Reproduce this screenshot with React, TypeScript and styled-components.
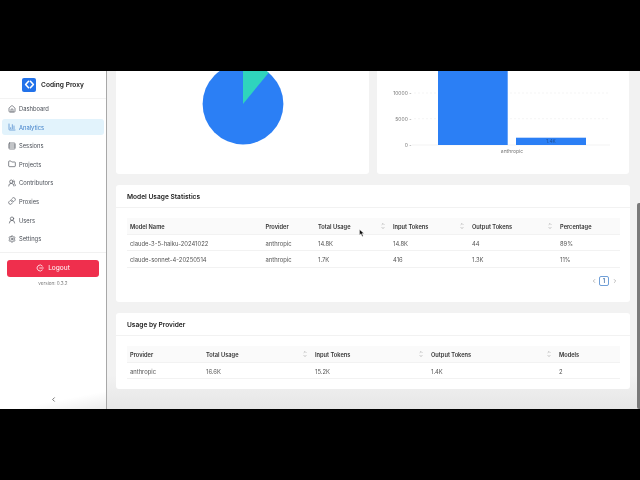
import React from 'react';
import styled, { createGlobalStyle } from 'styled-components';
import { Home, ChartColumn, Rows3, Folder, UsersRound, Link, UserRound, Settings, ChevronLeft, ChevronRight, ChevronUp, ChevronDown } from 'lucide-react';

const GlobalStyle = createGlobalStyle`
  html, body { margin: 0; padding: 0; background: #000; }
  body { font-family: Inter, "Liberation Sans", sans-serif; }
`;

const Page = styled.div`
  width: 640px;
  height: 480px;
  display: flex;
  flex-direction: column;
  justify-content: center;
  background: #000;
`;

const Frame = styled.div`
  position: relative;
  height: 338px;
  display: flex;
  overflow: hidden;
  background: linear-gradient(#f2f2f2 0, #f2f2f2 90%, #e6e6e6 100%);
  filter: blur(0.3px);
`;

const Sidebar = styled.aside`
  width: 107px;
  box-sizing: border-box;
  flex-shrink: 0;
  display: flex;
  flex-direction: column;
  background: #fff;
  border-right: 1.5px solid #a8a8a8;
`;

const Brand = styled.div`
  height: 27px;
  display: flex;
  align-items: center;
  justify-content: center;
  gap: 5px;
  border-bottom: 1px solid #f3f3f3;
  font-size: 6.6px;
  font-weight: 600;
  color: #222;
`;

const Logo = styled.div`
  width: 14px;
  height: 14px;
  border-radius: 2px;
  background: #2272ea;
  display: flex;
  align-items: center;
  justify-content: center;
`;

const Menu = styled.nav`
  display: flex;
  flex-direction: column;
  gap: 2.6px;
  padding: 1.5px 2px 5px;
  border-bottom: 1px solid #f1f1f1;
`;

const MenuItem = styled.div<{ $active?: boolean }>`
  height: 16px;
  display: flex;
  align-items: center;
  gap: 3px;
  padding-left: 6px;
  border-radius: 3px;
  font-size: 5.8px;
  color: ${props => (props.$active ? '#3f7fc9' : '#4a4f57')};
  background: ${props => (props.$active ? '#e2f3fc' : 'transparent')};
`;

const LogoutButton = styled.div`
  margin: 7px 7px 0;
  height: 17px;
  border-radius: 3px;
  background: #ef2f4d;
  color: #fff;
  display: flex;
  align-items: center;
  justify-content: center;
  gap: 4px;
  font-size: 6.6px;
`;

const Version = styled.div`
  margin-top: 4px;
  text-align: center;
  font-size: 4.6px;
  color: #777;
`;

const Collapse = styled.div`
  margin-top: auto;
  height: 20px;
  display: flex;
  align-items: center;
  justify-content: center;
  color: #444;
  background: linear-gradient(to bottom right, #fff 55%, #ececec 100%);
`;

const Main = styled.main`
  flex: 1;
  display: flex;
  flex-direction: column;
  gap: 11px;
  padding: 0 11px 0 9px;
`;

const ChartRow = styled.div`
  display: grid;
  grid-template-columns: 253px 252px;
  gap: 8px;
  height: 103px;
`;

const Card = styled.section`
  background: #fff;
  border-radius: 3px;
  overflow: hidden;
`;

const ChartCard = styled(Card)`
  border-radius: 0 0 3px 3px;
`;

const TableCard = styled(Card)<{ $height: number }>`
  height: ${props => props.$height}px;
`;

const CardTitle = styled.h3`
  margin: 0;
  height: 23px;
  box-sizing: border-box;
  padding: 1px 0 0 11px;
  display: flex;
  align-items: center;
  font-size: 6.6px;
  font-weight: 600;
  color: #222;
  border-bottom: 1px solid #f2f2f2;
`;

const TableWrap = styled.div`
  margin: 10px 9.5px 0 11px;
`;

const Row = styled.div<{ $cols: string; $head?: boolean }>`
  display: grid;
  grid-template-columns: ${props => props.$cols};
  height: ${props => (props.$head ? '17px' : '16.3px')};
  align-items: center;
  font-size: ${props => (props.$head ? '5.7px' : '5.85px')};
  font-weight: ${props => (props.$head ? 600 : 400)};
  color: ${props => (props.$head ? '#333' : '#555')};
  background: ${props => (props.$head ? '#fafafa' : '#fff')};
  border-bottom: 1px solid #f2f2f2;
  box-sizing: border-box;
`;

const Cell = styled.div`
  position: relative;
  padding: 1px 0 0 3px;
  box-sizing: border-box;
  height: 100%;
  display: flex;
  align-items: center;
  white-space: nowrap;
`;

const Sorter = styled.span`
  position: absolute;
  right: 5px;
  top: 50%;
  transform: translateY(-50%);
  display: flex;
  flex-direction: column;
  color: #a0a0a0;
  line-height: 0;
`;

const Pager = styled.div`
  margin-top: 8px;
  display: flex;
  justify-content: flex-end;
  align-items: center;
  gap: 2.5px;
  padding-right: 12px;
  color: #bdbdbd;
`;

const PageNumber = styled.span`
  width: 10px;
  height: 10px;
  box-sizing: border-box;
  border: 1px solid #6f9fd8;
  border-radius: 2px;
  display: flex;
  align-items: center;
  justify-content: center;
  font-size: 5.5px;
  font-weight: 600;
  color: #3f6fa8;
`;

const ScrollThumb = styled.div`
  position: absolute;
  right: 0;
  top: 132px;
  bottom: 0;
  width: 3px;
  border-radius: 2px 0 0 2px;
  background: #7a7a7a;
`;

const Cursor = styled.svg`
  position: absolute;
  left: 359px;
  top: 158px;
`;

const menu = [
  { label: 'Dashboard', Icon: Home },
  { label: 'Analytics', Icon: ChartColumn, active: true },
  { label: 'Sessions', Icon: Rows3 },
  { label: 'Projects', Icon: Folder },
  { label: 'Contributors', Icon: UsersRound },
  { label: 'Proxies', Icon: Link },
  { label: 'Users', Icon: UserRound },
  { label: 'Settings', Icon: Settings },
];

interface Column {
  title: string;
  sort?: boolean;
}

const modelCols = '135.5px 52.5px 75px 79px 88px 63px';
const modelColumns: Column[] = [
  { title: 'Model Name' },
  { title: 'Provider' },
  { title: 'Total Usage', sort: true },
  { title: 'Input Tokens', sort: true },
  { title: 'Output Tokens', sort: true },
  { title: 'Percentage' },
];
const modelRows = [
  ['claude-3-5-haiku-20241022', 'anthropic', '14.8K', '14.8K', '44', '89%'],
  ['claude-sonnet-4-20250514', 'anthropic', '1.7K', '416', '1.3K', '11%'],
];

const providerCols = '76px 109px 116px 128px 64px';
const providerColumns: Column[] = [
  { title: 'Provider' },
  { title: 'Total Usage', sort: true },
  { title: 'Input Tokens', sort: true },
  { title: 'Output Tokens', sort: true },
  { title: 'Models' },
];
const providerRows = [['anthropic', '16.6K', '15.2K', '1.4K', '2']];

const DataTable: React.FC<{ cols: string; columns: Column[]; rows: string[][] }> = ({ cols, columns, rows }) => (
  <TableWrap>
    <Row $cols={cols} $head>
      {columns.map(col => (
        <Cell key={col.title}>
          {col.title}
          {col.sort && (
            <Sorter>
              <ChevronUp size={4} strokeWidth={4} />
              <ChevronDown size={4} strokeWidth={4} />
            </Sorter>
          )}
        </Cell>
      ))}
    </Row>
    {rows.map(row => (
      <Row $cols={cols} key={row[0]}>
        {row.map((value, i) => (
          <Cell key={i}>{value}</Cell>
        ))}
      </Row>
    ))}
  </TableWrap>
);

const PieChart = () => (
  <svg width="253" height="103" viewBox="116 71 253 103">
    <circle cx="243" cy="104" r="40.4" fill="#2b7ff5" />
    <path d="M243 104 L243 63.6 A40.4 40.4 0 0 1 268.7 72.8 Z" fill="#2fd4bd" />
  </svg>
);

const BarChart = () => (
  <svg width="252" height="103" viewBox="377 71 252 103" fontFamily="Inter, sans-serif" fontSize="5" fill="#777">
    {[93, 118.7].map(y => (
      <line key={y} x1="414" x2="610" y1={y} y2={y} stroke="#f0f0f0" strokeWidth="0.7" strokeDasharray="2 2" />
    ))}
    <line x1="412" x2="610" y1="145" y2="145" stroke="#eee" strokeWidth="0.7" />
    <text x="411.5" y="94.8" textAnchor="end">10000 -</text>
    <text x="411.5" y="120.5" textAnchor="end">5000 -</text>
    <text x="411.5" y="146.8" textAnchor="end">0 -</text>
    <rect x="438" y="60" width="69.7" height="85" fill="#2b7ff5" />
    <rect x="516" y="137.7" width="70" height="7.3" fill="#2b7ff5" />
    <text x="551" y="143.2" textAnchor="middle" fill="#1f4f94" fontSize="4.8">1.4K</text>
    <text x="512" y="153.2" textAnchor="middle">anthropic</text>
  </svg>
);

const App: React.FC = () => (
  <>
    <GlobalStyle />
    <Page>
      <Frame>
        <Sidebar>
          <Brand>
            <Logo>
              <svg width="11" height="11" viewBox="0 0 24 24" fill="none" stroke="#fff" strokeWidth="3.4" strokeLinejoin="round" strokeLinecap="round">
                <path d="M10 5 L3.5 12 L10 19" />
                <path d="M14 5 L20.5 12 L14 19" />
              </svg>
            </Logo>
            Coding Proxy
          </Brand>
          <Menu>
            {menu.map(({ label, Icon, active }) => (
              <MenuItem key={label} $active={active}>
                <Icon size={8} strokeWidth={2} />
                {label}
              </MenuItem>
            ))}
          </Menu>
          <LogoutButton>
            <svg width="8" height="8" viewBox="0 0 24 24" fill="none" stroke="#fff" strokeWidth="2.4" strokeLinecap="round">
              <path d="M19 6 A9 9 0 1 0 19 18" />
              <path d="M11 12 H22" />
            </svg>
            Logout
          </LogoutButton>
          <Version>version: 0.3.2</Version>
          <Collapse>
            <ChevronLeft size={7} strokeWidth={2.5} />
          </Collapse>
        </Sidebar>
        <Main>
          <ChartRow>
            <ChartCard>
              <PieChart />
            </ChartCard>
            <ChartCard>
              <BarChart />
            </ChartCard>
          </ChartRow>
          <TableCard $height={117}>
            <CardTitle>Model Usage Statistics</CardTitle>
            <DataTable cols={modelCols} columns={modelColumns} rows={modelRows} />
            <Pager>
              <ChevronLeft size={6} strokeWidth={4} />
              <PageNumber>1</PageNumber>
              <ChevronRight size={6} strokeWidth={4} />
            </Pager>
          </TableCard>
          <TableCard $height={76}>
            <CardTitle>Usage by Provider</CardTitle>
            <DataTable cols={providerCols} columns={providerColumns} rows={providerRows} />
          </TableCard>
        </Main>
        <ScrollThumb />
        <Cursor width="6" height="8" viewBox="0 0 6 8">
          <path d="M0.5 0.5 L0.5 6 L2 4.8 L3.2 7.4 L4.2 7 L3 4.4 L5 4.4 Z" fill="#111" stroke="#fff" strokeWidth="0.4" />
        </Cursor>
      </Frame>
    </Page>
  </>
);

export default App;
